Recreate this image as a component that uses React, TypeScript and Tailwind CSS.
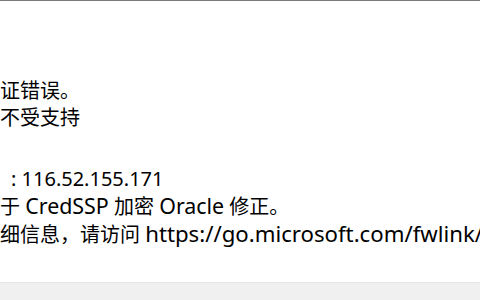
import React from "react";

function L({ children, big }: { children: React.ReactNode; big?: boolean }) {
  return <span className={big ? "text-[22.2px]" : "text-[21.4px]"}>{children}</span>;
}

export default function App() {
  return (
    <div className="w-[480px] h-[300px] bg-white flex flex-col overflow-hidden border-t border-[#7b7b7b]">
      <div className="flex-1 overflow-hidden pt-[76px]">
        <div
          className="-ml-[100px] text-[20px] leading-[27px] text-black whitespace-nowrap flex flex-col"
          style={{ fontFamily: '"Noto Sans", "Noto Sans CJK SC", sans-serif' }}
        >
          <div>出现身份验证错误。</div>
          <div className="mb-[34px]">要求的函数不受支持</div>
          <div>
            远程计算机<span className="pl-[11px]">: 116.52.155.171</span>
          </div>
          <div>
            这可能是由于 <L>CredSSP</L> 加密 <L>Oracle</L> 修正。
          </div>
          <div>
            若要了解详细信息，请访问 <L big>https://go.microsoft.com/fwlink/?linkid=866660</L>
          </div>
        </div>
      </div>
      <div className="h-[18px] bg-[#f0f0f0] border-t border-[#e5e5e5]" />
    </div>
  );
}
